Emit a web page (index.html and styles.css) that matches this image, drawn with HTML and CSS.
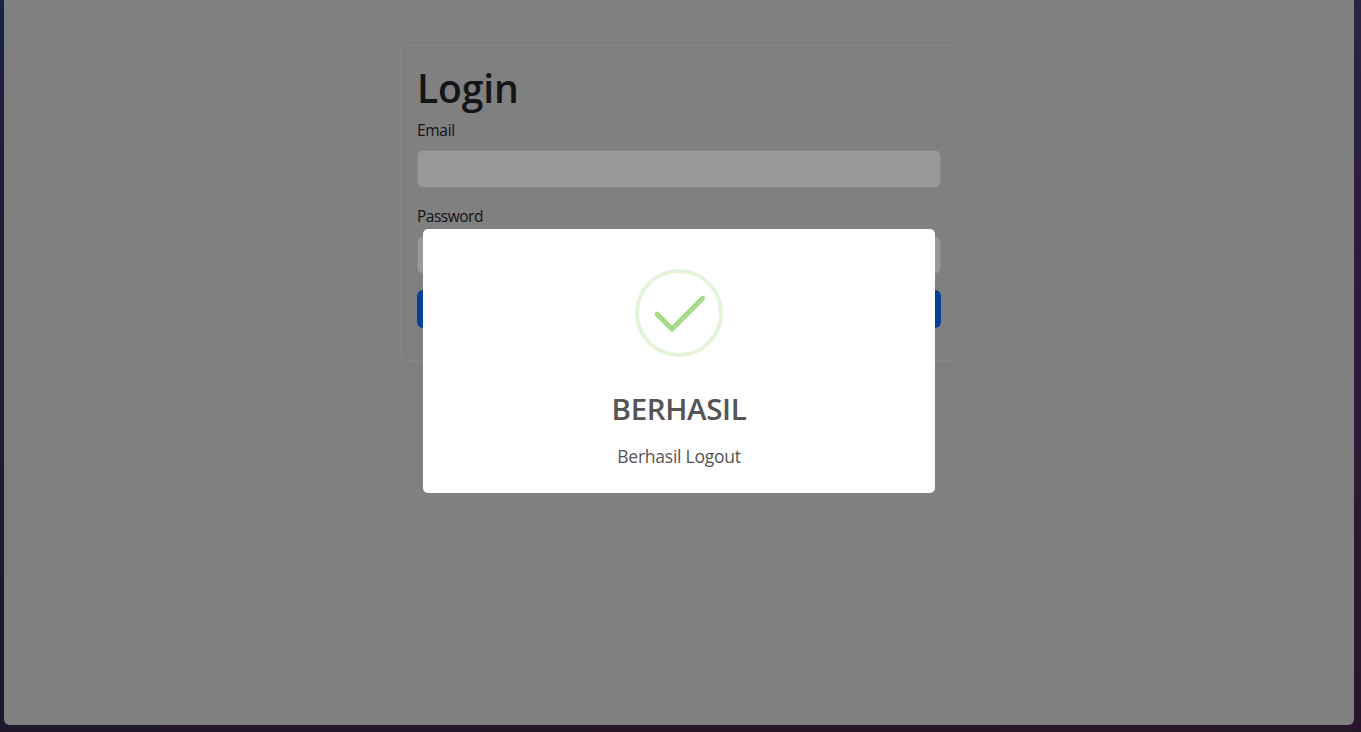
FILE: index.html
```html
<!DOCTYPE html>
<html lang="id">
<head>
<meta charset="utf-8">
<title>Login</title>
<link rel="stylesheet" href="styles.css">
</head>
<body>
<div class="page">
  <form class="card">
    <h1 class="title"><span>Login</span></h1>
    <label class="label label-email" for="email"><span>Email</span></label>
    <input class="input" id="email" type="email">
    <label class="label label-password" for="password"><span>Password</span></label>
    <input class="input" id="password" type="password">
    <button class="submit" type="button" aria-label="Login"></button>
  </form>
  <div class="overlay">
    <div class="modal" role="dialog">
      <svg class="success" width="88" height="88" viewBox="0 0 88 88" fill="none">
        <circle cx="44" cy="44" r="42" stroke="#a5dc86" stroke-opacity=".3" stroke-width="4"/>
        <path d="M22.2 45.2 37 60 67.7 29.3" stroke="#a5dc86" stroke-width="5" stroke-linecap="round" stroke-linejoin="round"/>
      </svg>
      <h2 class="modal-title"><span>BERHASIL</span></h2>
      <p class="modal-text"><span>Berhasil Logout</span></p>
    </div>
  </div>
</div>
</body>
</html>
```
FILE: styles.css
```css
* { box-sizing: border-box; }
html { height: 100%; }
body {
  margin: 0;
  height: 732px;
  padding: 0 7px 7px 4px;
  overflow: hidden;
  font-family: "Open Sans", "Noto Sans", sans-serif;
  background:
    linear-gradient(180deg, #1b2242 0, #211b35 300px, #20182b 732px) left / 5px 100% no-repeat,
    linear-gradient(180deg, #2a2340 0, #2c1b38 350px, #271629 732px) right / 9px 100% no-repeat,
    linear-gradient(90deg, #20182b, #261526 50%, #271829);
}
.page {
  position: relative;
  height: 725px;
  padding-top: 45px;
  background: #d5d5d5;
  border-radius: 0 0 6px 6px;
  overflow: hidden;
}
.card {
  width: 558px;
  height: 316px;
  margin: 0 auto;
  padding: 16px;
  border: 1px solid #dee2e6;
  border-radius: 6px;
  display: flex;
  flex-direction: column;
  color: #212529;
}
.title {
  margin: 2px 0 6px;
  font-size: 39px;
  line-height: 48px;
  font-weight: 600;
  letter-spacing: -.1px;
}
.label {
  font-size: 15.5px;
  line-height: 24px;
  margin-bottom: 8px;
}
.label-email { letter-spacing: -.3px; }
.label-password { letter-spacing: -.5px; }
.input {
  width: 100%;
  height: 38px;
  border: 1px solid #dee2e6;
  border-radius: 6px;
  background: #fff;
  margin: 0 0 16px;
}
.submit {
  height: 38px;
  border: 0;
  border-radius: 6px;
  background: #0d6efd;
}
.overlay {
  position: absolute;
  inset: 0;
  display: flex;
  justify-content: center;
  align-items: flex-start;
  padding-top: 229px;
  background: rgba(0, 0, 0, .4);
}
.modal {
  width: 512px;
  height: 264px;
  padding-top: 40px;
  border-radius: 5px;
  background: #fff;
  display: flex;
  flex-direction: column;
  align-items: center;
  color: #545454;
}
.success { display: block; }
.modal-title {
  margin: 34px 0 0;
  font-size: 29.5px;
  line-height: 36px;
  font-weight: 600;
  letter-spacing: -.35px;
}
.modal-text {
  margin: 16px 0 0;
  font-size: 17.5px;
  line-height: 27px;
  letter-spacing: -.25px;
}
```
